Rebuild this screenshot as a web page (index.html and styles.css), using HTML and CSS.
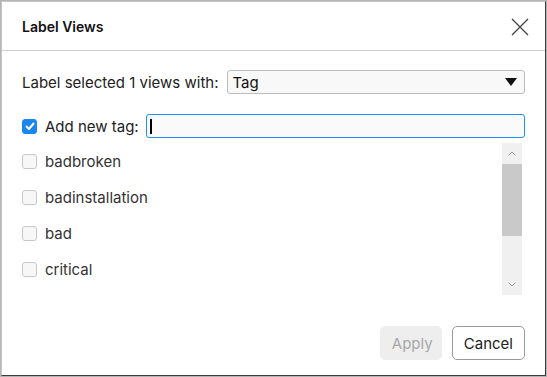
FILE: index.html
```html
<!DOCTYPE html>
<html lang="en">
<head>
  <meta charset="UTF-8" />
  <title>Label Views</title>
  <link rel="stylesheet" href="styles.css">
</head>
<body>
  <div class="frame">
    <div class="dialog">
      <div class="dialog-header">
        <h1 class="title">Label Views</h1>
        <button class="close-btn" aria-label="Close">
          <svg width="18" height="18" viewBox="0 0 18 18">
            <path d="M1 1 L17 17 M17 1 L1 17" stroke="#444" stroke-width="1.3" fill="none" />
          </svg>
        </button>
      </div>

      <div class="dialog-body">
        <div class="row">
          <span class="row-label select-label">Label selected 1 views with:</span>
          <div class="select">
            <span>Tag</span>
            <svg width="12" height="8" viewBox="0 0 12 8"><path d="M0 0 H12 L6 8 Z" fill="#111" /></svg>
          </div>
        </div>

        <div class="row">
          <span class="check checked">
            <svg width="10" height="8" viewBox="0 0 10 8"><path d="M1 4 L4 7 L9 1" stroke="#fff" stroke-width="2" fill="none" /></svg>
          </span>
          <span class="row-label">Add new tag:</span>
          <div class="text-input"><span class="caret"></span></div>
        </div>

        <div class="tag-list">
          <div class="tag-items">
            <label class="tag-item"><span class="check"></span>badbroken</label>
            <label class="tag-item"><span class="check"></span>badinstallation</label>
            <label class="tag-item"><span class="check"></span>bad</label>
            <label class="tag-item"><span class="check"></span>critical</label>
          </div>
          <div class="scrollbar">
            <div class="sb-btn">
              <svg width="8" height="5" viewBox="0 0 8 5"><path d="M0.5 4.5 L4 1 L7.5 4.5" stroke="#999" stroke-width="1" fill="none" /></svg>
            </div>
            <div class="sb-thumb"></div>
            <div class="sb-track"></div>
            <div class="sb-btn">
              <svg width="8" height="5" viewBox="0 0 8 5"><path d="M0.5 0.5 L4 4 L7.5 0.5" stroke="#999" stroke-width="1" fill="none" /></svg>
            </div>
          </div>
        </div>
      </div>

      <div class="dialog-footer">
        <button class="btn btn-disabled">Apply</button>
        <button class="btn">Cancel</button>
      </div>
    </div>
  </div>
</body>
</html>
```

FILE: styles.css
```css
* {
  margin: 0;
  padding: 0;
  box-sizing: border-box;
}

html, body {
  width: 547px;
  height: 377px;
  overflow: hidden;
  font-family: 'Inter', 'Noto Sans', sans-serif;
  background: #fff;
}

.frame {
  width: 547px;
  height: 377px;
  border: 1px solid #b4b4b4;
}

.dialog {
  width: 100%;
  height: 100%;
  display: flex;
  flex-direction: column;
  background: #fff;
  border-top: 1px solid #c8c8c8;
  border-left: 1px solid #c8c8c8;
  border-right: 1px solid #3c3c3c;
  border-bottom: 1px solid #3c3c3c;
}

.dialog-header {
  height: 49px;
  display: flex;
  align-items: center;
  justify-content: space-between;
  padding: 0 16px 0 20px;
  border-bottom: 1px solid #cfcfcf;
  flex-shrink: 0;
}

.title {
  font-size: 14px;
  font-weight: 600;
  color: #111;
}

.close-btn {
  border: none;
  background: none;
  width: 18px;
  height: 18px;
  margin-top: 1px;
  display: flex;
}

.dialog-body {
  padding: 19px 20px 0 20px;
  display: flex;
  flex-direction: column;
  gap: 20px;
  flex: 1;
}

.row {
  display: flex;
  align-items: center;
  height: 24px;
}

.row-label {
  font-size: 15px;
  color: #222;
  margin-right: 7px;
  white-space: nowrap;
}

.select-label {
  margin-right: 9px;
}

.select {
  flex: 1;
  height: 24px;
  display: flex;
  align-items: center;
  justify-content: space-between;
  padding: 0 7px 0 4px;
  border: 1px solid #bdbdbd;
  border-radius: 3px;
  background: #f8f8f8;
  font-size: 15px;
  color: #111;
}

.check {
  width: 15px;
  height: 15px;
  border: 1px solid #c8c8c8;
  border-radius: 3px;
  background: #f7f7f7;
  margin-right: 8px;
  flex-shrink: 0;
  display: flex;
  align-items: center;
  justify-content: center;
}

.check.checked {
  background: #1a86f0;
  border-color: #1a86f0;
}

.text-input {
  flex: 1;
  height: 24px;
  border: 1px solid #1e8fff;
  border-radius: 3px;
  background: #fafafa;
  display: flex;
  align-items: center;
  padding-left: 3px;
}

.caret {
  width: 2px;
  height: 15px;
  background: #000;
}

.tag-list {
  display: flex;
  height: 152px;
  margin-top: -15px;
  margin-right: 3px;
  overflow: hidden;
}

.tag-items {
  flex: 1;
  display: flex;
  flex-direction: column;
}

.tag-item {
  height: 36px;
  flex-shrink: 0;
  display: flex;
  align-items: center;
  font-size: 15px;
  color: #333;
}

.scrollbar {
  width: 20px;
  display: flex;
  flex-direction: column;
  background: #f0f0f0;
}

.sb-btn {
  height: 21px;
  display: flex;
  align-items: center;
  justify-content: center;
  flex-shrink: 0;
}

.sb-thumb {
  height: 72px;
  background: #c9c9c9;
}

.sb-track {
  flex: 1;
}

.dialog-footer {
  display: flex;
  justify-content: flex-end;
  gap: 10px;
  padding: 0 20px 15px 0;
}

.btn {
  height: 34px;
  padding: 0 11px;
  font-family: 'Inter', 'Noto Sans', sans-serif;
  font-size: 15px;
  color: #222;
  background: #fff;
  border: 1px solid #999;
  border-radius: 5px;
}

.btn-disabled {
  color: #a8a8a8;
  background: #eeeeee;
  border-color: #eeeeee;
  width: 62px;
}
```
